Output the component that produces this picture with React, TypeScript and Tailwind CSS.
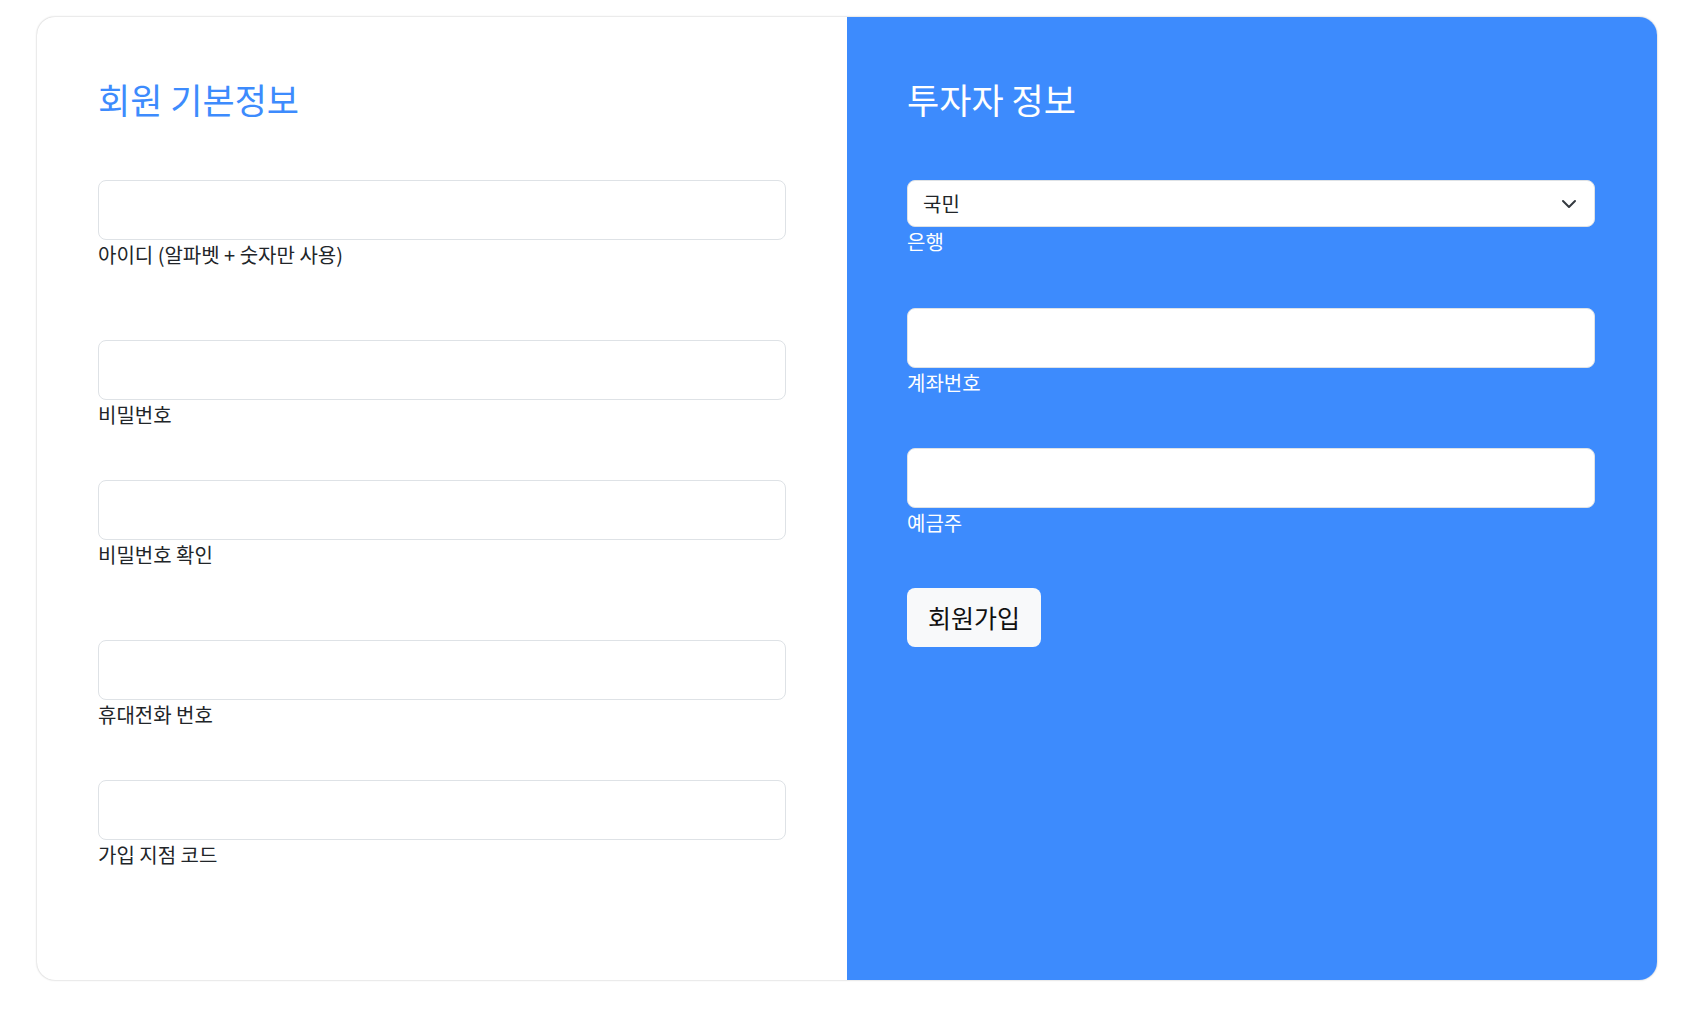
import React from "react";

const font = { fontFamily: '"Noto Sans CJK KR", "Noto Sans", sans-serif' };

function LeftField({ label, mt, type = "text" }: { label: string; mt: string; type?: string }) {
  return (
    <div className={mt}>
      <input
        type={type}
        className="block w-full h-[60px] rounded-[8px] border border-[#dee2e6] bg-white px-3 outline-none"
      />
      <div className="mt-[2px] text-[20px] leading-[26px] text-[#212529]">{label}</div>
    </div>
  );
}

function RightField({ label, mt }: { label: string; mt: string }) {
  return (
    <div className={mt}>
      <input
        type="text"
        className="block w-full h-[60px] rounded-[8px] border border-[#dee2e6] bg-white px-3 outline-none"
      />
      <div className="mt-[2px] text-[20px] leading-[26px] text-white">{label}</div>
    </div>
  );
}

export default function App() {
  return (
    <div className="min-h-[1016px] w-full bg-white" style={font}>
      <div className="ml-[37px] pt-[17px]">
        <div className="flex w-[1620px] h-[963px] rounded-[18px] shadow-[0_0_2px_rgba(0,0,0,0.3)] bg-white">
          {/* Left panel */}
          <div className="w-1/2 px-[61px] pt-[62px]">
            <h2 className="h-[40px] text-[35px] leading-[40px] text-[#3d8bfd] font-normal">회원 기본정보</h2>
            <LeftField label="아이디 (알파벳 + 숫자만 사용)" mt="mt-[61px]" />
            <LeftField label="비밀번호" mt="mt-[72px]" type="password" />
            <LeftField label="비밀번호 확인" mt="mt-[52px]" type="password" />
            <LeftField label="휴대전화 번호" mt="mt-[72px]" />
            <LeftField label="가입 지점 코드" mt="mt-[52px]" />
          </div>
          {/* Right panel */}
          <div className="w-1/2 rounded-r-[18px] bg-[#3d8bfd] pl-[60px] pr-[62px] pt-[62px]">
            <h2 className="h-[40px] text-[35px] leading-[40px] text-white font-normal">투자자 정보</h2>
            <div className="mt-[61px]">
              <div className="relative h-[47px] w-full rounded-[8px] border border-[#dee2e6] bg-white">
                <select
                  className="h-full w-full appearance-none rounded-[8px] bg-transparent pl-[15px] text-[20px] text-[#212529] outline-none"
                  defaultValue="국민"
                  style={font}
                >
                  <option value="국민">국민</option>
                  <option value="신한">신한</option>
                  <option value="우리">우리</option>
                  <option value="하나">하나</option>
                </select>
                <svg
                  className="pointer-events-none absolute right-[17px] top-[18px]"
                  width="16"
                  height="10"
                  viewBox="0 0 16 10"
                  fill="none"
                >
                  <path d="M2 2l6 6 6-6" stroke="#343a40" strokeWidth="2" strokeLinecap="round" strokeLinejoin="round" />
                </svg>
              </div>
              <div className="mt-[2px] text-[20px] leading-[26px] text-white">은행</div>
            </div>
            <RightField label="계좌번호" mt="mt-[53px]" />
            <RightField label="예금주" mt="mt-[52px]" />
            <button
              type="button"
              className="mt-[52px] h-[59px] w-[134px] rounded-[8px] bg-[#f8f9fa] text-[25px] text-[#111] leading-none"
              style={font}
            >
              회원가입
            </button>
          </div>
        </div>
      </div>
    </div>
  );
}
